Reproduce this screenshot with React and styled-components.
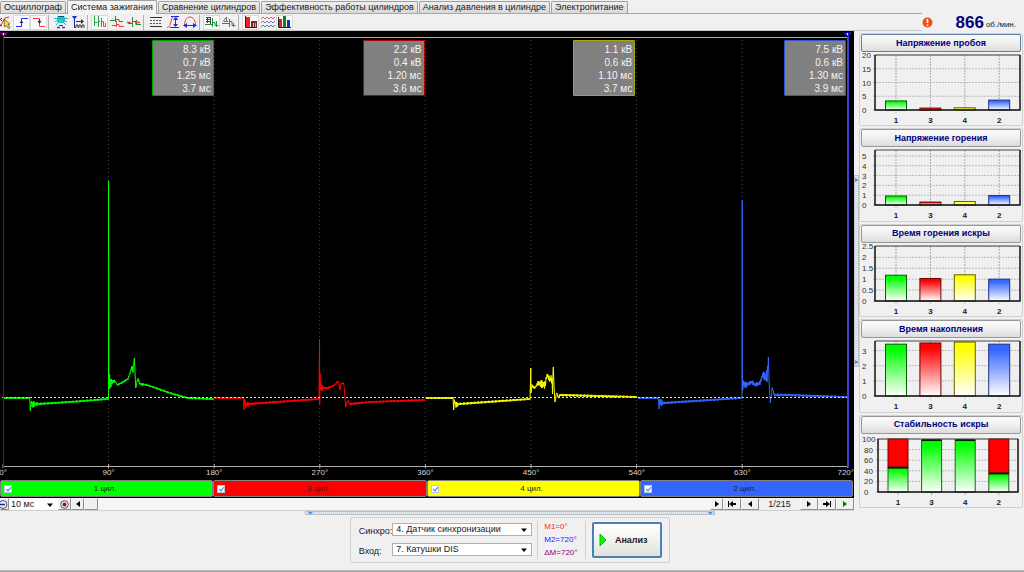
import styled, { createGlobalStyle } from "styled-components"
import { useState } from "react"

const GREEN = "#00ff00"
const RED = "#ff0000"
const YELLOW = "#ffff00"
const BLUE = "#3366ff"

const tabs = [
    "Осциллограф",
    "Система зажигания",
    "Сравнение цилиндров",
    "Эффективность работы цилиндров",
    "Анализ давления в цилиндре",
    "Электропитание",
]

const cylinders = [
    { name: "1 цил.", color: GREEN, edge: "#00a000", values: ["8.3 кВ", "0.7 кВ", "1.25 мс", "3.7 мс"] },
    { name: "3 цил.", color: RED, edge: "#b00000", values: ["2.2 кВ", "0.4 кВ", "1.20 мс", "3.6 мс"] },
    { name: "4 цил.", color: YELLOW, edge: "#a8a800", values: ["1.1 кВ", "0.6 кВ", "1.10 мс", "3.7 мс"] },
    { name: "2 цил.", color: BLUE, edge: "#2c55d0", values: ["7.5 кВ", "0.6 кВ", "1.30 мс", "3.9 мс"] },
]

const degrees = [0, 90, 180, 270, 360, 450, 540, 630, 720]

const charts = [
    { title: "Напряжение пробоя", max: 20, ticks: [0, 5, 10, 15, 20], bars: [3.3, 0.7, 0.8, 3.6], active: true },
    { title: "Напряжение горения", max: 5.6, ticks: [0, 1, 2, 3, 4, 5], bars: [0.92, 0.3, 0.36, 0.96] },
    { title: "Время горения искры", max: 2.52, ticks: [0, 0.5, 1, 1.5, 2, 2.5], bars: [1.18, 1.03, 1.2, 1] },
    { title: "Время накопления", max: 3.63, ticks: [0, 1, 2, 3], bars: [3.42, 3.5, 3.56, 3.42] },
    { title: "Стабильность искры", max: 100, ticks: [0, 20, 40, 60, 80, 100], bars: [46, 98, 98, 35], stacked: true },
]

// traces: [x, y, noise] knots, drawn on an 854 x 449 field

const traces = [
    {
        color: GREEN,
        points: [
            [3, 367, 1], [29.5, 367, 1], [30, 373, 0], [30.3, 380, 0], [31, 370, 2], [32, 374, 4], [34, 373, 3], [38, 373, 1.2],
            [70, 371, 1], [108, 368, 1], [108.5, 367, 0], [108.6, 150, 0], [108.9, 350, 0], [109.2, 358, 0], [109.6, 343, 0], [110, 353, 5], [112, 351, 3],
            [115, 350, 1], [117.5, 354, 1], [123, 351, 1], [128, 348, 1], [131.5, 337, 2], [133, 339, 3], [134.3, 327, 0],
            [135.2, 346, 0], [135.8, 357, 0], [137.6, 347, 1], [140, 353, 1.5], [147, 354, 1], [173, 363, 1], [188, 367, 1], [213.5, 368, 1],
        ],
    },
    {
        color: RED,
        points: [
            [214, 367, 1], [243.5, 367, 1], [244, 379, 0], [244.5, 370, 2], [246, 374, 4], [249, 373, 1.2], [319, 368, 1],
            [319.5, 308, 0], [319.7, 374, 0], [320, 342, 0], [320.5, 355, 7], [322, 357, 3], [324, 357, 1], [328, 357, 1.2], [335, 354, 1],
            [338.3, 350, 1], [340, 359, 0], [341, 353, 1], [343.7, 352, 1], [344.7, 362, 0], [345.7, 376, 0], [347.7, 369, 1],
            [349.3, 373, 1.2], [370, 371, 1], [425, 369, 1],
        ],
    },
    {
        color: YELLOW,
        points: [
            [425.5, 367, 1], [453, 367, 1], [453.7, 379, 0], [454.4, 370, 2], [456, 374, 3], [459, 373, 1.2], [530, 368, 1],
            [530.8, 337, 0], [531, 362, 0], [532, 355, 2], [535, 357, 1], [538, 352, 2], [541, 353, 4], [545, 354, 4],
            [547, 344, 2], [550, 349, 3], [551.5, 347, 6], [552.5, 358, 5], [553.3, 336, 0], [554, 356, 4], [555, 371, 0], [556.7, 361, 1],
            [558, 367, 1], [560, 364, 1.2], [637, 366, 1],
        ],
    },
    {
        color: BLUE,
        points: [
            [637.5, 367, 1], [658.5, 367, 1], [659, 378, 0], [659.6, 369, 2], [661, 372, 4], [664, 372, 1.2], [741.5, 367, 1],
            [742, 366, 0], [742.3, 169, 0], [742.5, 360, 0], [743, 353, 5], [746, 354, 3], [748, 353, 2], [752, 351, 2], [755, 354, 2], [760, 352, 2],
            [762.7, 344, 3], [766, 346, 6], [767.6, 343, 8], [768.4, 326, 0], [769.2, 355, 3], [770.3, 372, 0], [772.2, 357, 1],
            [774.3, 364, 1.5], [787, 364, 1.2], [847, 366, 1],
        ],
    },
]

const tracePath = (points) => {
    let d = `M${points[0][0]} ${points[0][1]}`
    let n = 0
    for (let i = 1; i < points.length; i++) {
        const [x0, y0, a0] = points[i - 1]
        const [x1, y1, a1] = points[i]
        const steps = Math.max(1, Math.round((x1 - x0) / 0.5))
        for (let s = 1; s <= steps; s++) {
            const t = s / steps
            const amp = a0 + (a1 - a0) * t
            const wobble = (n % 2 ? 1 : -1) * amp * (0.4 + 0.6 * Math.abs(Math.sin(n * 2.7)))
            d += ` L${(x0 + (x1 - x0) * t).toFixed(1)} ${(y0 + (y1 - y0) * t + wobble).toFixed(1)}`
            n++
        }
    }
    return d
}

// toolbar icons

const toolGroups = [
    [
        {
            name: "Курсор",
            art: <>
                <path d="M0 10h3l4-7 4-1" stroke="#f03030" />
                <path d="M1 3l3 3M4 3L1 6M0 12l4-2" stroke="#1020e0" />
                <path d="M6 4l6 5-2 .500 2 3-1.500 1-2-3-2 1.500z" fill="#ffe800" stroke="#444" strokeWidth=".7" />
            </>,
        },
        { name: "Фронт", on: true, art: <><path d="M1 11.500h5.500v-8H13" stroke="#2030e0" /><path d="M4.500 8l2-2.500 2 2.500z" fill="#1020a0" /></> },
        { name: "Спад", on: true, art: <><path d="M1 3.500h6.500v8H13" stroke="#f04040" /><path d="M5.500 6l2 3 2-3z" fill="#302080" /><path d="M7.500 4v4" stroke="#302080" /></> },
    ],
    [
        {
            name: "Форсунка",
            art: <>
                <path d="M4 1h6l1 2v3l-2 2H5L3 6V3z" fill="#10d0d8" />
                <path d="M4 1.500h6M5 10.500h4" stroke="#105060" />
                <path d="M0 3.500h14M1 7l4-2M13 7L9 5M2 10l3-3M12 10L9 7" stroke="#10b8c0" />
                <path d="M3 12.500h3M8 12.500h3" stroke="#2040e0" strokeWidth="1.500" />
            </>,
        },
        {
            name: "Период",
            art: <>
                <path d="M1 1h5L4.500 3.500h-2z" fill="#2030d0" />
                <path d="M3.500 3v10" stroke="#2030a0" />
                <path d="M5 6.500h7" stroke="#303030" />
                <path d="M10 4l3 2.500L10 9z" fill="#303030" />
                <path d="M4 12.500h1V10h2v2.500h1V10h2v2.500h1V10h2v3" stroke="#404040" />
            </>,
        },
    ],
    [
        { name: "Последовательно", on: true, art: <><path d="M1.500 7V1v10M1.500 7.500h3M5.500 1v11M5.500 6.500H7" stroke="#20a040" /><path d="M8.500 12V3M8.500 6.500h2v5h2V8" stroke="#f04040" /></> },
        { name: "Друг под другом", art: <><path d="M0 5.500h5M5.500 7V1M6 4.500h3v2h4" stroke="#209040" /><path d="M2 10.500h4M6.500 12V6M7 9.500h2v2h5" stroke="#f04040" /></> },
        { name: "Наложение", art: <><path d="M0 7.500h4M8 7.500h5M9.500 5v5" stroke="#f04040" strokeWidth="1.400" /><path d="M1 8.500h4M5.500 12V2M6 6.500h3v3h5" stroke="#209040" /></> },
    ],
    [
        { name: "Линии", art: <><path d="M1 2.500h12M1 11.500h12" stroke="#333" /><path d="M1 5.500h12M1 8.500h12" stroke="#555" strokeDasharray="2 1" /></> },
        { name: "Амплитуда", art: <><path d="M1 12.500c5 0 3-11 7-11s2 3 4 3" stroke="#f04040" /><path d="M5 1.500h8M4 12.500h9M9.500 3v8" stroke="#2030e0" /><path d="M7 5l2.500-3L12 5zM7 9l2.500 3L12 9z" fill="#2030e0" /></> },
        { name: "Период сигнала", art: <><path d="M1.500 10c0-4 2-8 5.500-8s5.500 4 5.500 8" stroke="#f04040" /><path d="M2 10.500h10" stroke="#2030e0" /><path d="M4 8v5L0 10.500zM10 8v5l4-2.500z" fill="#2030e0" /></> },
    ],
    [
        { name: "Значения", on: true, art: <><path d="M1 2.500h4M1 4.500h5M1 6.500h5M2.500 2v6M5.500 2v7" stroke="#404040" /><path d="M0 9.500h7M7.500 12V3M8 7.500h2v3h3.500M11.500 6v6" stroke="#209040" /></> },
        { name: "Метки", art: <><path d="M1 6.500l3-4M4.500 2v5M2 6.500h4" stroke="#707070" /><path d="M0 8.500h7M7.500 12V4M8 6.500h2v4h3.500M11.500 8v4" stroke="#208888" /></> },
    ],
    [
        { name: "Гистограмма", on: true, art: <><path d="M2 2h4v10H2z" fill="#f02020" /><path d="M7 6h6v6H7z" fill="#703030" /><path d="M9.500 8v4M11.500 8v4" stroke="#f0a0a0" /><path d="M1.500 1v11.500H13" stroke="#222" /></> },
        { name: "Волны", art: <><path d="M0 4l2-2 2 2 2-2 2 2 2-2 2 2 2-2" stroke="#f06060" /><path d="M0 8l2-2 2 2 2-2 2 2 2-2 2 2 2-2" stroke="#6080f0" /><path d="M0 12l2-2 2 2 2-2 2 2 2-2 2 2 2-2" stroke="#40a060" /></> },
        { name: "Столбцы", on: true, art: <><path d="M1 4h3v8H1z" fill="#e02020" /><path d="M5 1h3v11H5z" fill="#108020" /><path d="M9 5h3v7H9z" fill="#1030c0" /><path d="M.500 2v10.500H13" stroke="#222" /></> },
    ],
]

const Arrow = ({ d = "M2 1l4 3-4 3z", color = "#000" }) => (
    <svg width="8" height="8" viewBox="0 0 8 8"><path d={d} fill={color} /></svg>
)

const BarChart = ({ title, max, ticks, bars, stacked, active }) => {
    const left = stacked ? 17 : 14
    const right = stacked ? 157 : 159
    const top = stacked ? 5 : 3
    const bottom = 58
    const barWidth = stacked ? 20 : 21
    const yOf = (v) => bottom - (v / max) * (bottom - top)
    const names = ["1", "3", "4", "2"]
    const fills = ["green", "red", "yellow", "blue"]
    const lines = ["#006000", "#700000", "#606000", "#203080"]
    const gap = stacked ? 33.6 : 34.4

    return (
        <Group>
            <GroupButton $active={active}>{title}</GroupButton>
            <ChartSvg viewBox="0 0 160 73" role="img" aria-label={title}>
                {ticks.map(t => (
                    <g key={t}>
                        <path d={`M${left - 2} ${yOf(t)}H${right}`} stroke="#bbb" strokeDasharray="2 1" />
                        <TickText x={stacked && t < 100 ? 3 : 1} y={yOf(t) + 3}>{t}</TickText>
                    </g>
                ))}
                {bars.map((v, i) => {
                    const cx = (stacked ? 37 : 35) + i * gap
                    const x = cx - barWidth / 2
                    return (
                        <g key={i}>
                            <path d={`M${cx} ${top}V${bottom + 3}`} stroke="#aaa" strokeDasharray="2 1" />
                            {stacked && v < 90 && <rect x={x} y={top} width={barWidth} height={yOf(v) - top} fill={RED} stroke="#700000" />}
                            <rect x={x} y={yOf(v)} width={barWidth} height={bottom - yOf(v)} fill="#fff" />
                            <rect
                                x={x}
                                y={yOf(v)}
                                width={barWidth}
                                height={bottom - yOf(v)}
                                fill={`url(#${stacked ? "green" : fills[i]})`}
                                stroke={stacked ? "#206020" : lines[i]}
                            />
                            {stacked && <path d={`M${x} ${yOf(v)}h${barWidth}`} stroke="#002000" strokeWidth="2" />}
                            <NameText x={cx} y="71">{names[i]}</NameText>
                        </g>
                    )
                })}
                <path d={`M${left} ${top}H${right}`} stroke="#444" />
                <path d={`M${left} ${top}V${bottom}H${right}V${top}`} fill="none" stroke="#111" strokeWidth="1.500" />
            </ChartSvg>
        </Group>
    )
}

const Gradients = () => (
    <GradientSvg aria-hidden="true">
        <defs>
            {[["green", GREEN], ["red", RED], ["yellow", YELLOW], ["blue", BLUE]].map(([id, color]) => (
                <linearGradient key={id} id={id} x1="0" y1="0" x2="0" y2="1">
                    <stop offset="0.1" stopColor={color} />
                    <stop offset="1" stopColor="#fff" />
                </linearGradient>
            ))}
        </defs>
    </GradientSvg>
)

const App = () => {

    const [ tab, setTab ] = useState(1)
    const [ visible, setVisible ] = useState([true, true, true, true])

    const toggleCylinder = (i) => {
        setVisible(visible.map((v, n) => n === i ? !v : v))
    }

    return (
        <Page>
            <GlobalStyle />
            <Gradients />
            <TabBar>
                {tabs.map((t, i) => (
                    <Tab key={t} $active={i === tab} onClick={() => setTab(i)}>{t}</Tab>
                ))}
            </TabBar>

            <Toolbar>
                {toolGroups.map((group, g) => (
                    <ToolGroup key={g}>
                        {group.map(tool => (
                            <ToolButton key={tool.name} aria-label={tool.name} $on={tool.on}>
                                <svg width="14" height="14" viewBox="0 0 14 14" fill="none">{tool.art}</svg>
                            </ToolButton>
                        ))}
                    </ToolGroup>
                ))}
                <Rpm>
                    <svg width="11" height="11" viewBox="0 0 11 11">
                        <circle cx="5.500" cy="5.500" r="5" fill="#e8541a" />
                        <path d="M5.500 2v4M5.500 7.500v1.500" stroke="#fff" strokeWidth="1.600" />
                    </svg>
                    <RpmValue>866</RpmValue>
                    <RpmUnit>об./мин.</RpmUnit>
                </Rpm>
            </Toolbar>

            <Main>
                <ScopeCol>
                    <Plot>
                        <PlotSvg viewBox="0 0 854 449" preserveAspectRatio="none" fill="none">
                            {degrees.slice(1, 8).map((d, i) => (
                                <path key={d} d={`M${108.5 + i * 105.6} 9V438`} stroke="#484848" strokeDasharray="1 3" />
                            ))}
                            <path d="M3 6.500H848M3 435.500H848" stroke="#b0b0b0" />
                            {degrees.map((d, i) => (
                                <path key={d} d={`M${3 + i * 105.6} 433v4`} stroke="#b0b0b0" />
                            ))}
                            {traces.map((t, i) => visible[i] && (
                                <path key={t.color} d={tracePath(t.points)} stroke={t.color} strokeLinejoin="bevel" />
                            ))}
                            <path d="M2 366.500H848" stroke="#ddd" strokeDasharray="2 2" />
                            <path d="M3.500 3V436" stroke="#800080" />
                            <path d="M848 3V436" stroke="#4040d0" strokeWidth="2" />
                            <path d="M0 1.500h8L3.500 6.500z" fill="#900090" />
                            <path d="M843 1.500h9L847.500 6.500z" fill="#1818ff" />
                            <path d="M3.500 2v2M847.500 2v2" stroke="#fff" />
                        </PlotSvg>
                        <Readouts>
                            {cylinders.map(c => (
                                <Readout key={c.name} $edge={c.edge}>
                                    {c.values.map(v => <span key={v}>{v}</span>)}
                                </Readout>
                            ))}
                        </Readouts>
                        <DegreeAxis>
                            {degrees.map(d => <Degree key={d}>{d}°</Degree>)}
                        </DegreeAxis>
                    </Plot>

                    <CylinderRow>
                        {cylinders.map((c, i) => (
                            <CylinderLabel key={c.name} $color={c.color}>
                                <Check type="checkbox" checked={visible[i]} onChange={() => toggleCylinder(i)} />
                                <CylinderName>{c.name}</CylinderName>
                            </CylinderLabel>
                        ))}
                    </CylinderRow>

                    <NavRow>
                        <NavButton $w={9} aria-label="Уменьшить">
                            <svg width="9" height="9" viewBox="0 0 9 9" fill="none">
                                <circle cx="3" cy="4.500" r="4" fill="#e8e8ff" stroke="#555" />
                                <path d="M0 4.500h5" stroke="#2020a0" strokeWidth="1.500" />
                            </svg>
                        </NavButton>
                        <TimeBox>
                            <Select $plain aria-label="Развёртка" defaultValue="10">
                                <option value="10">10 мс</option>
                                <option value="20">20 мс</option>
                            </Select>
                            <Arrow d="M1 2.500h6L4 6z" />
                        </TimeBox>
                        <NavButton $w={13} aria-label="Запись">
                            <svg width="9" height="9" viewBox="0 0 9 9" fill="none">
                                <circle cx="4.500" cy="4.500" r="3.800" stroke="#555" />
                                <circle cx="4.500" cy="4.500" r="2" fill="#a01010" />
                            </svg>
                        </NavButton>
                        <NavButton $w={13} aria-label="Прокрутить влево"><Arrow d="M6 1L2 4l4 3z" /></NavButton>
                        <NavButton $w={14} aria-label="Ползунок" />
                        <Track />
                        <NavButton $w={13} aria-label="Прокрутить вправо"><Arrow /></NavButton>
                        <NavButton $w={18} aria-label="Первый кадр"><Arrow d="M0 1h1v6H0zM5 1v6L1 4zM5 3h3v2H5z" /></NavButton>
                        <NavButton $w={18} aria-label="Предыдущий кадр"><Arrow d="M6 1v6L2 4z" /></NavButton>
                        <Counter>1/215</Counter>
                        <NavButton $w={18} aria-label="Следующий кадр"><Arrow /></NavButton>
                        <NavButton $w={18} aria-label="Последний кадр"><Arrow d="M7 1h1v6H7zM3 1l4 3-4 3zM0 3h3v2H0z" /></NavButton>
                        <NavButton $w={18} aria-label="Воспроизвести"><Arrow color="#008000" /></NavButton>
                    </NavRow>
                </ScopeCol>

                <SideSplitter>
                    <SideHandle>
                        <Arrow d="M2 2l4 2-4 2z" color="#3399ff" />
                        <Arrow d="M2 2l4 2-4 2z" color="#3399ff" />
                    </SideHandle>
                </SideSplitter>

                <Side>
                    {charts.map(c => <BarChart key={c.title} {...c} />)}
                </Side>
            </Main>

            <BottomSplitter>
                <Arrow d="M2 3h5L4 6z" color="#3399ff" />
                <Arrow d="M2 3h5L4 6z" color="#3399ff" />
            </BottomSplitter>

            <Footer>
                <Settings>
                    <Fields>
                        <FieldLabel htmlFor="sync">Синхро:</FieldLabel>
                        <SelectBox>
                            <Select id="sync" defaultValue="4">
                                <option value="4">4.  Датчик синхронизации</option>
                            </Select>
                            <Arrow d="M1 2.500h6L4 6z" />
                        </SelectBox>
                        <FieldLabel htmlFor="input">Вход:</FieldLabel>
                        <SelectBox>
                            <Select id="input" defaultValue="7">
                                <option value="7">7.  Катушки DIS</option>
                            </Select>
                            <Arrow d="M1 2.500h6L4 6z" />
                        </SelectBox>
                    </Fields>
                    <Markers>
                        <Marker $color="#ff2020">M1=0°</Marker>
                        <Marker $color="#2020ff">M2=720°</Marker>
                        <Marker $color="#800080">ΔM=720°</Marker>
                    </Markers>
                    <AnalyzeButton>
                        <svg width="8" height="12" viewBox="0 0 8 12"><path d="M1 0l6 6-6 6z" fill="#00ff00" stroke="#00c000" /></svg>
                        <AnalyzeText>Анализ</AnalyzeText>
                    </AnalyzeButton>
                </Settings>
            </Footer>
        </Page>
    )
}

export default App

// styles

const GlobalStyle = createGlobalStyle`
    * {
        box-sizing: border-box;
    }
    body {
        margin: 0;
        background: #f0f0f0;
        font-family: "Liberation Sans", Arial, sans-serif;
        font-size: 9px;
        color: #202020;
    }
    button, select, input {
        font: inherit;
        color: inherit;
        margin: 0;
    }
`

const Page = styled.div`
    display: flex;
    flex-direction: column;
    min-height: 100vh;
    overflow: hidden;
    border-bottom: 1px solid #a8a8a8;
`

const GradientSvg = styled.svg`
    position: absolute;
    width: 0;
    height: 0;
`

// Tabs

const TabBar = styled.div`
    display: flex;
    align-items: flex-end;
    gap: 1px;
    height: 14px;
    border-bottom: 1px solid #a8a8a8;
`

const Tab = styled.button`
    height: ${props => props.$active ? "14px" : "12px"};
    margin-bottom: ${props => props.$active ? "-1px" : "0"};
    padding: 0 3px;
    border: 1px solid #a0a0a0;
    border-bottom: 0;
    border-radius: 2px 2px 0 0;
    background: ${props => props.$active ? "#f4f4f4" : "linear-gradient(#eeeeee, #d8d8d8)"};
    line-height: 11px;
    white-space: nowrap;
`

// Toolbar

const Toolbar = styled.div`
    display: flex;
    align-items: center;
    height: 17px;
    border-bottom: 1px solid #c8c8c8;
`

const ToolGroup = styled.div`
    display: flex;
    padding-right: 1px;
    margin-right: 3px;
    border-right: 1px solid #b0b0b0;

    &:first-child {
        margin-left: -4px;
    }
    &:nth-last-child(2) {
        border-right: 0;
    }
`

const ToolButton = styled.button`
    display: flex;
    align-items: center;
    justify-content: center;
    width: 17px;
    height: 15px;
    padding: 0;
    border: 1px solid ${props => props.$on ? "#dadada" : "transparent"};
    background: ${props => props.$on ? "#fafafa" : "transparent"};

    svg {
        flex: none;
    }
`

const Rpm = styled.div`
    display: flex;
    align-items: center;
    margin-left: auto;
    padding-right: 8px;
    background: #f0f0f0;
`

const RpmValue = styled.span`
    margin: 2px 2px 0 23px;
    font-size: 17px;
    line-height: 16px;
    font-weight: bold;
    color: #000080;
`

const RpmUnit = styled.span`
    padding-top: 5px;
    font-size: 8px;
`

// Scope

const Main = styled.div`
    display: grid;
    grid-template-columns: 1fr 5px 165px;
    flex: 1;
`

const ScopeCol = styled.div`
    display: flex;
    flex-direction: column;
    min-width: 0;
`

const Plot = styled.div`
    position: relative;
    display: flex;
    flex-direction: column;
    justify-content: space-between;
    flex: 1;
    padding: 9px 6px 2px 3px;
    overflow: hidden;
    background: #000;
`

const PlotSvg = styled.svg`
    position: absolute;
    inset: 0;
    width: 100%;
    height: 100%;
`

const Readouts = styled.div`
    position: relative;
    display: grid;
    grid-template-columns: repeat(4, 1fr);
    justify-items: end;
    padding-right: 2px;
`

const Readout = styled.div`
    display: grid;
    width: 62px;
    height: 56px;
    padding: 2px 2px 0 0;
    border: 1px solid ${props => props.$edge};
    border-radius: 1px;
    background: #808080;
    color: #f4f4f4;
    font-size: 10px;
    line-height: 13px;
    text-align: right;
`

const DegreeAxis = styled.div`
    position: relative;
    display: flex;
    justify-content: space-between;
    margin-right: -6px;
    color: #d8d8d8;
    font-size: 8px;
    line-height: 10px;
`

const Degree = styled.span`
    display: flex;
    justify-content: center;
    width: 0;

    &:last-child {
        justify-content: flex-end;
        width: 6px;
    }
`

const CylinderRow = styled.div`
    display: flex;
    padding: 0 1px 1px 0;
    background: #000;
`

const CylinderLabel = styled.label`
    display: flex;
    align-items: center;
    flex: 1;
    height: 17px;
    padding: 0 14px 0 3px;
    border: 1px solid #808080;
    border-radius: 2px;
    background: ${props => props.$color};
`

const Check = styled.input`
    appearance: none;
    position: relative;
    width: 8px;
    height: 8px;
    border: 1px solid #b8c8d8;
    background: #fff;

    &:checked::after {
        content: "";
        position: absolute;
        left: 2px;
        top: 0;
        width: 2px;
        height: 4px;
        border: solid #2a80e0;
        border-width: 0 1px 1px 0;
        transform: rotate(40deg);
    }
`

const CylinderName = styled.span`
    flex: 1;
    text-align: center;
    font-size: 8px;
    color: #202020;
`

// Navigation under the scope

const NavRow = styled.div`
    display: flex;
    height: 13px;
    background: #f6f6f6;
    border-bottom: 1px solid #d0d0d0;
`

const NavButton = styled.button`
    display: flex;
    align-items: center;
    justify-content: center;
    width: ${props => props.$w}px;
    padding: 0;
    border: 1px solid;
    border-color: #f8f8f8 #909090 #909090 #f8f8f8;
    background: #f0f0f0;

    svg {
        flex: none;
    }
`

const Track = styled.div`
    flex: 1;
`

const Counter = styled.span`
    width: 41px;
    text-align: center;
    line-height: 12px;
    background: #f0f0f0;
`

const SelectBox = styled.div`
    position: relative;
    width: 140px;
    height: 13px;
    background: #fff;
    border: 1px solid #b0b0b0;

    svg {
        position: absolute;
        right: 3px;
        top: 2px;
        pointer-events: none;
    }
`

const TimeBox = styled(SelectBox)`
    width: 49px;
    height: 12px;
    border-color: #fff;
`

const Select = styled.select`
    display: block;
    appearance: none;
    width: 100%;
    height: 11px;
    padding: 0 0 0 ${props => props.$plain ? "1px" : "3px"};
    border: 0;
    background: transparent;
    line-height: 11px;
    white-space: pre;
`

// Splitters

const SideSplitter = styled.div`
    display: flex;
    align-items: center;
    padding: 1px 0;
`

const SideHandle = styled.div`
    display: flex;
    flex-direction: column;
    justify-content: space-between;
    align-items: center;
    width: 5px;
    height: 40%;
    overflow: hidden;
    border: 1px solid #c0c0c0;
    background: repeating-linear-gradient(#e4f0fa 0 1px, #c4d8ea 1px 2px);

    svg {
        flex: none;
    }
`

const BottomSplitter = styled.div`
    display: flex;
    align-items: center;
    justify-content: space-between;
    align-self: center;
    width: 40%;
    height: 4px;
    margin-right: 4px;
    overflow: hidden;
    border: 1px solid #c0c0c0;
    background: repeating-linear-gradient(90deg, #e4f0fa 0 1px, #c4d8ea 1px 2px);
`

// Side charts

const Side = styled.div`
    display: grid;
    grid-auto-rows: 1fr;
    gap: 2px;
    padding: 2px 1px 3px 0;
`

const Group = styled.section`
    padding: 0 1px;
    border: 1px solid #d0d0d0;
    border-radius: 2px;
`

const GroupButton = styled.button`
    display: block;
    width: 100%;
    height: 18px;
    padding: 0;
    border: 1px solid ${props => props.$active ? "#5c7fa8" : "#989898"};
    border-radius: 2px;
    background: linear-gradient(#fafafa, #f0f0f0 50%, #dcdcdc);
    color: #000080;
    font-size: 9px;
    line-height: 15px;
    font-weight: bold;
`

const ChartSvg = styled.svg`
    display: block;
    width: 100%;
`

const TickText = styled.text`
    font-size: 8px;
    fill: #303030;
`

const NameText = styled.text`
    font-size: 8px;
    font-weight: bold;
    fill: #202020;
    text-anchor: middle;
`

// Footer

const Footer = styled.footer`
    display: flex;
    justify-content: center;
    padding: 2px 4px 7px 0;
    border-bottom: 1px solid #b8b8b8;
`

const Settings = styled.div`
    display: flex;
    align-items: center;
    height: 46px;
    padding: 0 7px 0 8px;
    border: 1px solid #d0d0d0;
    border-radius: 2px;
`

const Fields = styled.div`
    display: grid;
    grid-template-columns: auto auto;
    row-gap: 5px;
    padding-right: 5px;
`

const FieldLabel = styled.label`
    padding-top: 2px;
    font-size: 9px;
    line-height: 13px;
`

const Markers = styled.div`
    display: flex;
    flex-direction: column;
    justify-content: space-between;
    width: 49px;
    height: 38px;
    padding-left: 6px;
    border: solid #d0d0d0;
    border-width: 0 1px;
`

const Marker = styled.span`
    color: ${props => props.$color};
    font-size: 8px;
    line-height: 12px;
`

const AnalyzeButton = styled.button`
    display: flex;
    align-items: center;
    width: 70px;
    height: 36px;
    margin-left: 6px;
    padding: 0 5px;
    border: 2px solid #4a80b4;
    border-radius: 2px;
    background: linear-gradient(#ffffff, #f2f2ee 50%, #e2e2da);
`

const AnalyzeText = styled.span`
    flex: 1;
    text-align: center;
    font-weight: bold;
`
